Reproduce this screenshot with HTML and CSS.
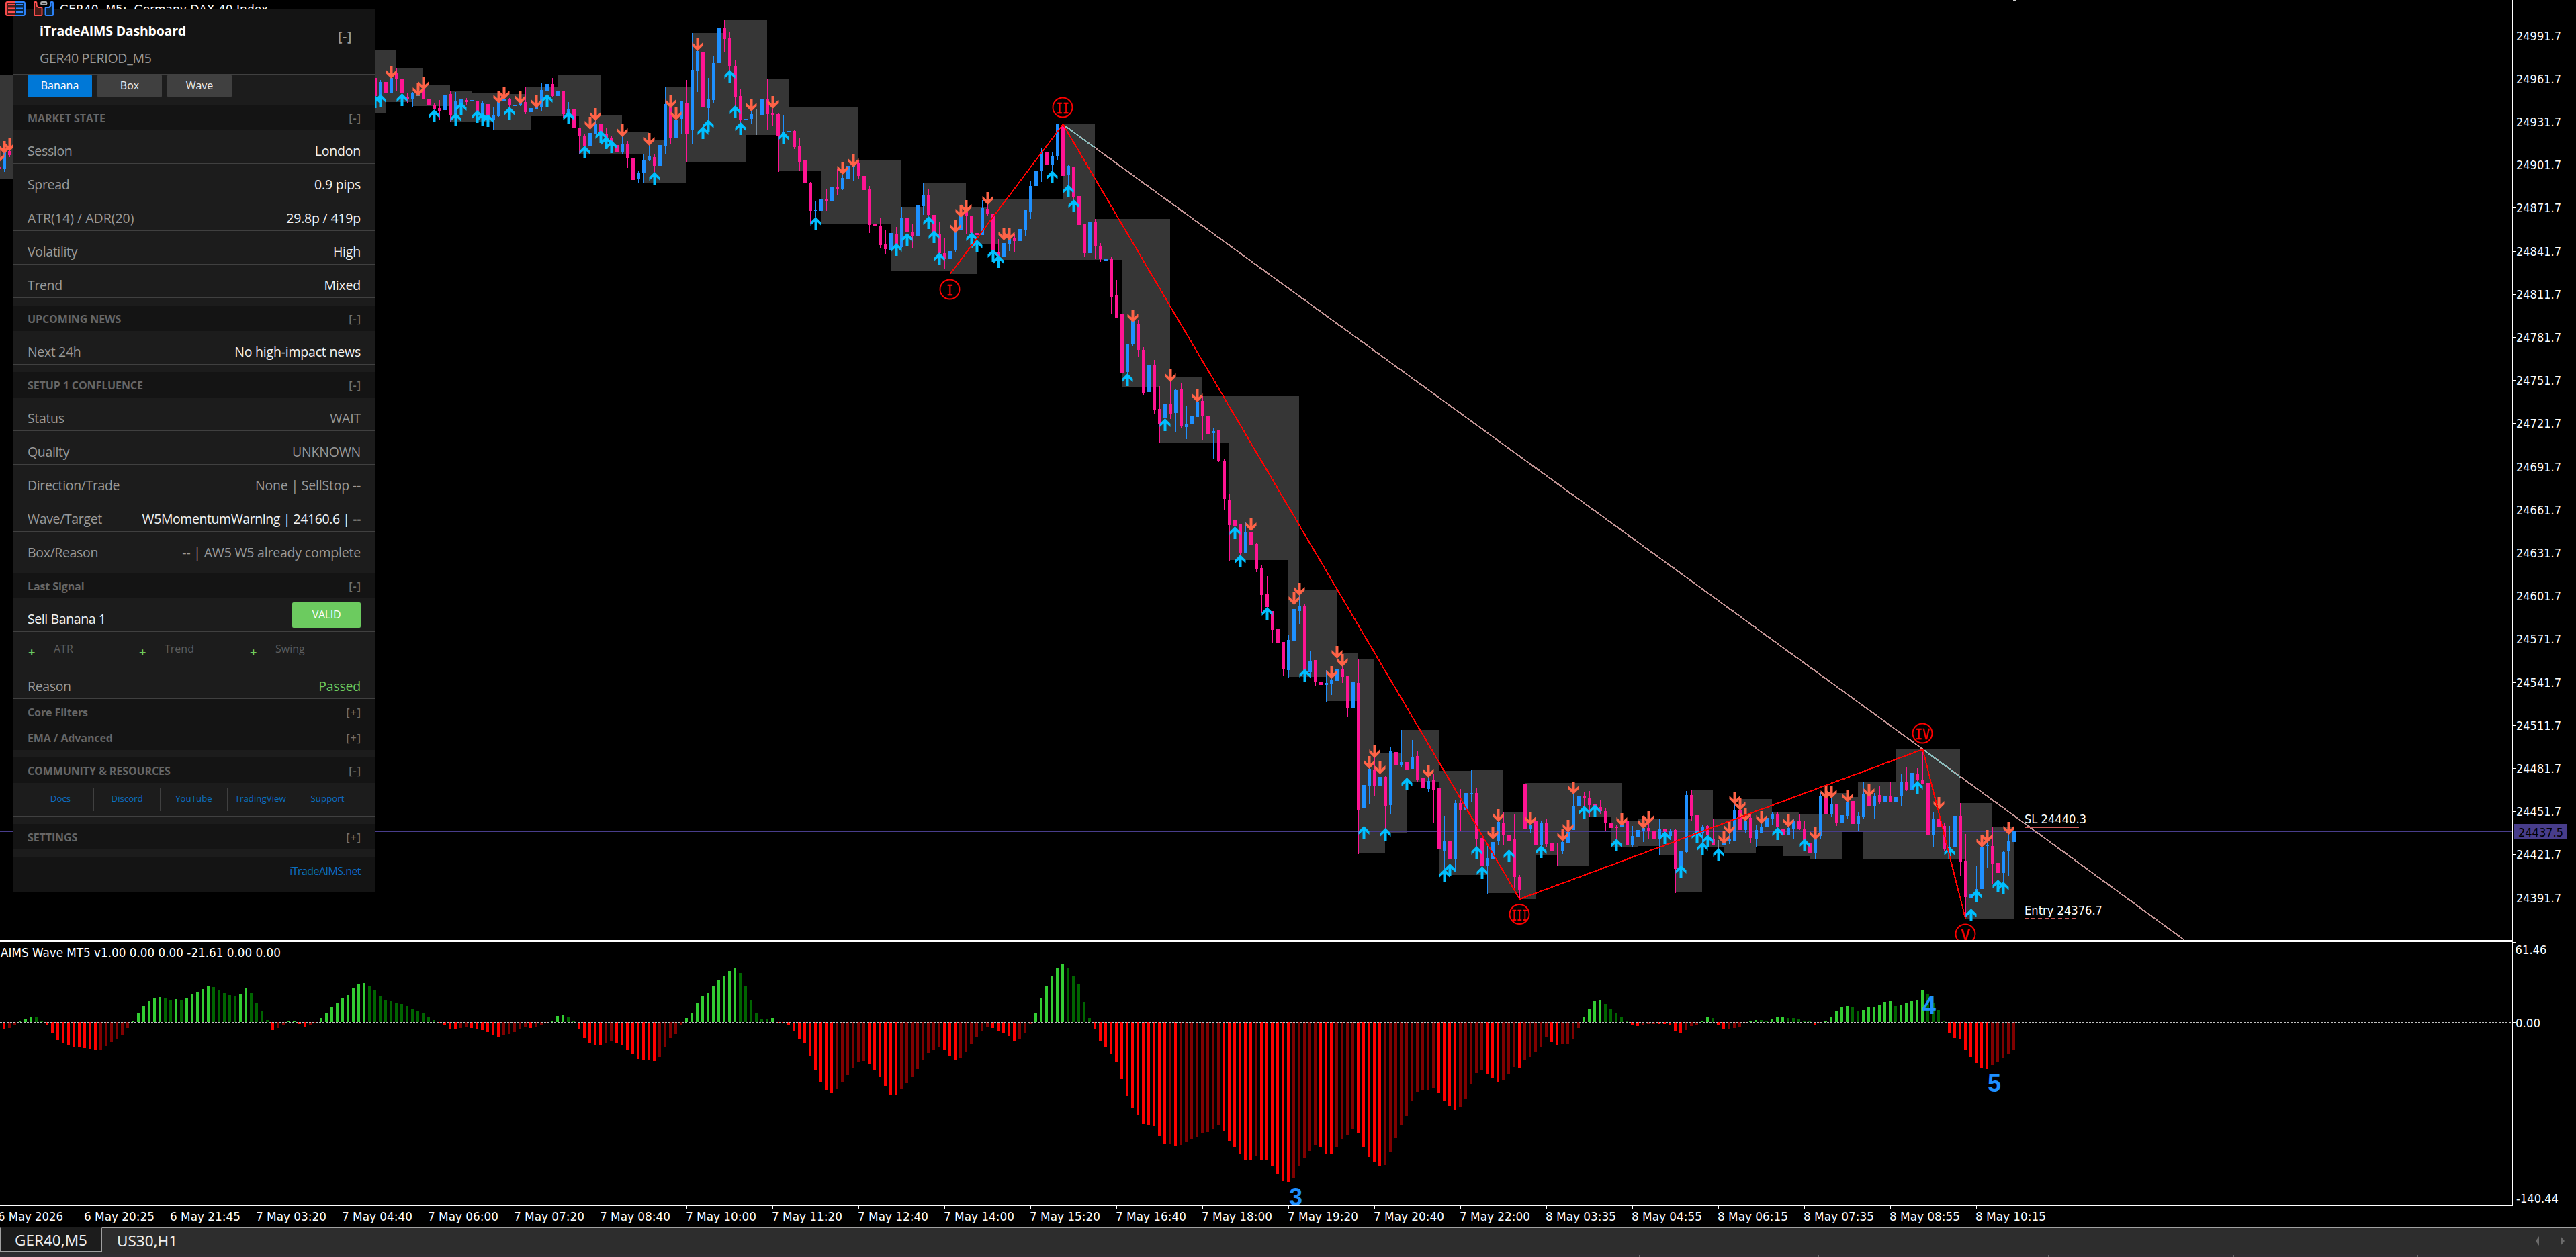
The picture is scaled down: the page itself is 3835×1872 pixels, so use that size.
FILE: index.html
```html
<!DOCTYPE html>
<html lang="en">
<head>
<meta charset="utf-8">
<title>GER40, M5</title>
<link rel="stylesheet" href="styles.css">
</head>
<body>
<main class="terminal">
  <section class="chart">
    <svg class="plot" id="plot" width="3835" height="1828" viewBox="0 0 3835 1828"></svg>

    <aside class="panel">
      <header class="panel-head">
        <div class="titles">
          <h1>iTradeAIMS Dashboard</h1>
          <p>GER40 PERIOD_M5</p>
        </div>
        <span class="fold">[-]</span>
      </header>
      <nav class="tabs">
        <span class="tab active">Banana</span>
        <span class="tab">Box</span>
        <span class="tab">Wave</span>
      </nav>

      <h2 class="section"><span>MARKET STATE</span><i>[-]</i></h2>
      <div class="row"><span>Session</span><b>London</b></div>
      <div class="row"><span>Spread</span><b>0.9 pips</b></div>
      <div class="row"><span class="wide">ATR(14) / ADR(20)</span><b>29.8p / 419p</b></div>
      <div class="row"><span>Volatility</span><b>High</b></div>
      <div class="row"><span>Trend</span><b>Mixed</b></div>

      <h2 class="section gap"><span>UPCOMING NEWS</span><i>[-]</i></h2>
      <div class="row"><span>Next 24h</span><b>No high-impact news</b></div>

      <h2 class="section gap"><span>SETUP 1 CONFLUENCE</span><i>[-]</i></h2>
      <div class="row"><span>Status</span><b class="dim">WAIT</b></div>
      <div class="row"><span>Quality</span><b class="dim">UNKNOWN</b></div>
      <div class="row"><span>Direction/Trade</span><b class="dim">None | SellStop --</b></div>
      <div class="row"><span>Wave/Target</span><b class="long">W5MomentumWarning | 24160.6 | --</b></div>
      <div class="row"><span>Box/Reason</span><b class="dim">-- | AW5 W5 already complete</b></div>

      <h2 class="section gap"><span>Last Signal</span><i>[-]</i></h2>
      <div class="row signal"><b>Sell Banana 1</b><em class="badge">VALID</em></div>
      <div class="row checks">
        <span class="check"><i>+</i>ATR</span>
        <span class="check"><i>+</i>Trend</span>
        <span class="check"><i>+</i>Swing</span>
      </div>
      <div class="row"><span>Reason</span><b class="ok">Passed</b></div>
      <h2 class="section"><span>Core Filters</span><i>[+]</i></h2>
      <h2 class="section"><span>EMA / Advanced</span><i>[+]</i></h2>

      <h2 class="section gap"><span>COMMUNITY &amp; RESOURCES</span><i>[-]</i></h2>
      <div class="row links">
        <a>Docs</a><a>Discord</a><a>YouTube</a><a>TradingView</a><a>Support</a>
      </div>

      <h2 class="section gap"><span>SETTINGS</span><i>[+]</i></h2>
      <footer class="panel-foot"><a>iTradeAIMS.net</a></footer>
    </aside>

    <svg class="chart-icons" width="84" height="26" viewBox="0 0 84 26" fill="none" stroke-width="1.9">
      <path d="M23 3H11Q9 3 9 5V21Q9 23 11 23H23Z" fill="#4a1c18" stroke="none"/>
      <path d="M23 3H35Q37 3 37 5V21Q37 23 35 23H23Z" fill="#08263f" stroke="none"/>
      <path d="M23 3H11Q9 3 9 5V21Q9 23 11 23H23M12 7H22M12 12.500H22M12 18H22" stroke="#ff4f4f"/>
      <path d="M23 3H35Q37 3 37 5V21Q37 23 35 23H23M24 7H34M24 12.500H34M24 18H34" stroke="#2f86ff"/>
      <path d="M52 3H53.500Q54.500 3 54.500 4V8.500L57 11H61.500Q62.500 11 62.500 12V22Q62.500 23 61.500 23H52Q51 23 51 22V4Q51 3 52 3Z" fill="#4a1c18" stroke="#ff4f4f"/>
      <path d="M78 3H76.500Q75.500 3 75.500 4V8.500L73 11H68.500Q67.500 11 67.500 12V22Q67.500 23 68.500 23H78Q79 23 79 22V4Q79 3 78 3Z" fill="#08263f" stroke="#2f86ff"/>
      <rect x="61" y="3" width="8.500" height="4" rx="1.500" fill="#333" stroke="#a8a8a8"/>
    </svg>
  </section>

  <footer class="tabbar">
    <div class="sheets">
      <span class="sheet current">GER40,M5</span>
      <span class="sheet">US30,H1</span>
      <svg class="pager" width="50" height="14" viewBox="0 0 50 14"><path d="M9 0V14L4 7ZM41 0V14L47 7Z" fill="#6a6a6a"/></svg>
    </div>
    <div class="status">
      <svg width="3835" height="4" viewBox="0 0 3835 4"><path d="M2440.500 1V4M2707.500 1V4M2907.500 1V4M3049.500 1V4M3190.500 1V4M3325.500 1V4M3464.500 1V4M3599.500 1V4" stroke="#666"/></svg>
    </div>
  </footer>
</main>
<script src="chart.js"></script>
</body>
</html>
```
FILE: styles.css
```css
* { box-sizing: border-box; }
body {
  margin: 0;
  background: #000;
  font-family: "Open Sans", "Noto Sans", sans-serif;
}
.terminal {
  width: 3835px;
  height: 1872px;
  display: flex;
  flex-direction: column;
  overflow: hidden;
}
.chart { position: relative; flex: 0 0 1828px; overflow: hidden; }
.plot { display: block; }
.plot text {
  font-family: "DejaVu Sans Condensed", "DejaVu Sans", sans-serif;
  font-stretch: condensed;
  font-size: 17.8px;
  fill: #fff;
}
.plot .wave {
  font-family: "Liberation Sans", Arial, sans-serif;
  font-stretch: normal;
  font-weight: bold;
  font-size: 36px;
  fill: #1e90ff;
}
.plot .roman {
  font-family: "DejaVu Sans Mono", monospace;
  font-stretch: normal;
  font-size: 22px;
  fill: #f00;
  stroke: #f00;
  stroke-width: 0.3px;
}
.plot .tag { fill: #000; }
.chart-icons { position: absolute; left: 0; top: 0; }

.panel {
  position: absolute;
  left: 19px;
  top: 13px;
  width: 540px;
  background: #1c1c1c;
  color: #999;
  font-size: 19.5px;
  letter-spacing: -0.35px;
}
.panel h1, .panel h2, .panel p { margin: 0; }
.panel i, .panel em { font-style: normal; }
.panel-head {
  height: 98px;
  padding: 0 35px 0 40px;
  display: flex;
  justify-content: space-between;
  background: #141414;
  border-bottom: 1px solid #404040;
}
.panel-head h1 {
  margin-top: 19px;
  font-size: 19.5px;
  line-height: 28px;
  letter-spacing: -0.2px;
  color: #fff;
}
.panel-head p { margin-top: 13px; line-height: 28px; letter-spacing: -0.3px; }
.fold { margin-top: 28px; line-height: 26px; font-weight: 600; letter-spacing: 0.6px; }
.tabs { display: flex; gap: 8px; padding-left: 22px; height: 45px; }
.tab {
  width: 96px;
  height: 34px;
  border-radius: 2px;
  background: #404040;
  color: #eee;
  font-size: 16px;
  line-height: 33px;
  text-align: center;
  letter-spacing: 0;
}
.tab.active { background: #0078d7; color: #fff; }
.section {
  height: 38px;
  padding: 2px 22px 0;
  display: flex;
  justify-content: space-between;
  background: #141414;
  color: #666;
  font-size: 16px;
  line-height: 37px;
  font-weight: bold;
  letter-spacing: -0.1px;
}
.section i { font-weight: 600; color: #707070; letter-spacing: 1px; margin-right: -1px; }
.section.gap { margin-top: 11px; }
.row {
  height: 50px;
  padding: 12px 22px 0;
  display: flex;
  justify-content: space-between;
  border-bottom: 1px solid #404040;
  line-height: 37px;
}
.row .wide { letter-spacing: 0; }
.row b { font-weight: normal; color: #f2f2f2; letter-spacing: -0.2px; }
.row b.long { letter-spacing: -0.42px; }
.row b.dim { color: #999; }
.row b.ok { color: #6ccb5f; }
.row.signal { padding-top: 6px; }
.row.signal b { line-height: 49px; letter-spacing: -0.4px; }
.badge {
  width: 102px;
  height: 38px;
  border-radius: 2px;
  background: #6ccb5f;
  color: #fff;
  font-size: 16px;
  line-height: 37px;
  text-align: center;
}
.row.checks { justify-content: flex-start; padding-top: 7px; }
.check {
  width: 165px;
  display: flex;
  color: #5e5e5e;
  font-size: 16px;
  line-height: 37px;
  letter-spacing: 0;
}
.check i {
  width: 39px;
  padding: 5px 0 0 1px;
  color: #6ccb5f;
  font-size: 18px;
  font-weight: 700;
}
.row.links { padding-top: 8px; }
.row.links a {
  width: 99px;
  height: 34px;
  border-right: 1px solid #404040;
  color: #0b6fc0;
  font-size: 13.3px;
  line-height: 31px;
  text-align: center;
  letter-spacing: 0;
}
.row.links a:last-child { border-right: 0; }
.panel-foot {
  margin-top: 11px;
  height: 52px;
  padding: 0 22px;
  background: #141414;
  text-align: right;
  font-size: 16px;
  line-height: 42px;
  letter-spacing: -0.55px;
  color: #0b6fc0;
}

.tabbar { flex: 1; display: flex; flex-direction: column; }
.sheets {
  height: 39px;
  display: flex;
  align-items: flex-start;
  background: #2d2d2d;
  border-top: 1px solid #a0a0a0;
  font-family: "Noto Sans", sans-serif;
  font-size: 22.5px;
  letter-spacing: 0;
  color: #eee;
}
.sheet { padding-left: 22px; line-height: 38px; height: 36px; }
.sheet.current {
  width: 152px;
  padding-left: 21px;
  line-height: 36px;
  margin-top: -1px;
  background: #1c1c1c;
  border: 1px solid #a0a0a0;
  border-top-color: #1c1c1c;
}
.pager { margin: 12px 14px 0 auto; }
.status { height: 5px; background: #2f2d31; border-top: 1px solid #a0a0a0; }
.status svg { display: block; }
```
FILE: chart.js
```js
const plot = document.getElementById('plot');
const parts = [];
const STEP = 8;

const COLORS = { p: '#ff1493', b: '#1e90ff', g: '#778899' };

function rect(x, y, w, h, fill) {
  parts.push(`<rect x="${x}" y="${y}" width="${w}" height="${h}" fill="${fill}" shape-rendering="crispEdges"/>`);
}
function line(x1, y1, x2, y2, color, width, extra = '') {
  parts.push(`<line x1="${x1}" y1="${y1}" x2="${x2}" y2="${y2}" stroke="${color}" stroke-width="${width}" shape-rendering="crispEdges" ${extra}/>`);
}
function text(x, y, str, length, cls = '') {
  const fit = length ? `textLength="${length}" lengthAdjust="spacingAndGlyphs"` : '';
  parts.push(`<text x="${x}" y="${y}" class="${cls}" ${fit}>${str}</text>`);
}

/* Range boxes: left, top, right, bottom */
const boxes = [
  [0,111,19,266],[559,74,574,169],[574,74,590,152],[590,102,614,152],[614,102,630,158],[630,126,670,158],
  [670,136,702,181],[702,139,735,181],[735,139,742,193],[742,140,782,193],[782,130,790,193],[790,130,831,173],
  [831,112,862,173],[862,112,894,229],[894,172,926,229],[926,196,958,229],[958,196,966,272],[966,209,990,272],
  [990,129,1022,272],[1022,129,1031,241],[1031,49,1078,241],[1078,30,1110,241],[1110,30,1142,201],
  [1142,118,1158,201],[1158,118,1174,255],[1174,159,1222,255],[1222,159,1278,333],[1278,238,1326,333],
  [1326,238,1342,404],[1342,308,1374,404],[1374,273,1414,404],[1414,273,1438,408],[1438,309,1454,408],
  [1454,309,1470,364],[1470,297,1486,364],[1486,297,1582,387],[1582,184,1630,387],[1630,326,1670,387],
  [1670,326,1726,577],[1726,326,1742,659],[1742,561,1790,659],[1790,590,1830,659],[1830,590,1918,834],
  [1918,590,1934,1008],[1934,879,1974,1008],[1974,879,1990,1044],[1990,973,2022,1044],[2022,981,2046,1271],
  [2046,1121,2062,1271],[2062,1121,2086,1240],[2086,1087,2094,1240],[2094,1087,2142,1165],[2142,1148,2190,1303],
  [2190,1147,2214,1303],[2214,1147,2238,1330],[2238,1209,2262,1330],[2262,1209,2270,1339],[2270,1166,2286,1339],
  [2286,1166,2318,1273],[2318,1166,2366,1289],[2366,1166,2398,1216],[2398,1166,2414,1261],[2414,1222,2438,1261],
  [2438,1219,2470,1260],[2470,1219,2494,1273],[2494,1219,2518,1329],[2518,1176,2534,1329],[2534,1176,2550,1261],
  [2550,1219,2566,1261],[2566,1219,2590,1270],[2590,1190,2614,1270],[2614,1190,2638,1260],[2638,1209,2654,1260],
  [2654,1209,2678,1275],[2678,1212,2694,1275],[2694,1212,2726,1280],[2726,1181,2742,1280],[2742,1181,2750,1237],
  [2750,1187,2766,1237],[2766,1165,2774,1237],[2774,1165,2822,1280],[2822,1116,2918,1280],[2918,1196,2926,1280],
  [2926,1196,2966,1368],[2966,1232,2998,1368]
];
for (const [l, t, r, b] of boxes) rect(l, t, r - l, b - t, '#363636');

/* Current price level */
rect(0, 1238, 3740, 1, '#483d8b');

/* Candles per block: colour, high, low, body top, body bottom.
   unit = subdivisions per pixel, base = pixel offset of the block. */
const candleBlocks = [
  { first: -1, unit: 2.3059, base: 0, rows: `p 572 580 572 580;b 523 590 523 578;p 510 540 519 533` },
  { first: 69, unit: 3, base: 0, rows: `
p 348 430 348 430;b 357 430 366 430;p 312 459 366 417;b 348 417 348 417;p 306 405 327 354;p 330 420 351 418;p 414 458 432 441;
b 411 476 414 441;g 425 471 426 429;p 395 444 395 444;p 438 527 441 471;p 462 490 471 486;p 447 534 483 495;b 423 492 426 492;
p 408 545 420 516;b 411 510 453 510;b 441 465 441 465;p 438 470 447 456;b 417 468 447 453;p 450 495 450 495;b 453 510 462 510;
p 453 515 465 515;b 480 582 513 534;b 456 522 456 519;b 440 459 440 453;p 438 480 441 471;b 426 483 468 474;b 455 474 455 471;
p 390 510 456 501;b 474 522 483 501;b 475 489 475 486;b 369 495 402 477;b 369 430 375 408;p 348 435 375 429;b 336 429 405 429;
p 405 528 405 510;b 456 510 486 505;p 489 576 489 573;p 573 690 573 609;p 600 660 606 654;b 576 651 594 651;b 537 597 555 597;
p 516 590 555 590;p 570 620 600 620;p 606 640 615 635;p 648 702 648 681;b 609 687 642 681;p 630 750 642 708;p 702 804 705 804;
b 765 819 771 801;b 687 819 714 774;b 648 720 696 717;p 690 768 702 741;b 630 765 648 741;b 387 690 465 651;p 480 645 480 615;
b 530 642 534 615;b 453 600 453 531;p 357 726 462 597;b 147 645 312 579;b 225 411 228 318;p 210 570 231 477;b 348 540 444 483;
b 249 459 282 447;b 126 303 126 282;p 90 234 126 174;p 144 315 171 297;p 267 475 294 432;p 396 550 429 537;b 498 606 531 534;
b 498 555 510 531;g 486 603 513 516;b 435 588 441 516;p 354 582 441 510;p 485 561 507 513;p 507 768 510 606;b 513 600 588 600;
b 477 630 585 591;p 579 666 585 657;p 615 762 654 723;p 696 828 717 816;p 813 1002 816 942;b 897 970 939 942;b 873 1008 891 942;
p 843 942 891 900;b 828 933 834 900` },
  { first: 155, unit: 2.7034, base: 100, rows: `
p 411 514 481 489;b 432 495 446 489;b 385 487 397 449;b 390 457 390 400;p 376 449 387 438;p 416 511 438 495;p 479 668 492 635;
p 616 722 633 641;p 606 727 638 716;p 654 754 714 733;b 616 825 668 735;p 643 715 670 715;b 562 727 608 725;p 570 670 608 665;
p 633 727 662 679;b 549 703 557 679;b 468 595 516 560;p 489 600 516 595;p 589 660 595 665;p 624 750 673 750;p 687 811 749 773;
b 716 833 741 773;b 665 743 665 738;b 600 708 600 657;p 580 670 584 600;p 597 670 597 668;p 630 700 668 676;b 535 676 568 676;
p 550 600 570 592;p 589 738 589 736;p 692 765 746 760;b 697 768 708 762;b 690 741 693 714;p 670 746 687 700;b 584 706 652 700;
b 576 679 576 654;b 460 611 479 584;b 406 524 416 479;b 324 462 341 419;p 320 392 341 392;b 341 420 360 392;b 230 376 230 360;
p 230 441 235 438;b 392 475 397 435;p 400 535 400 522;p 503 635 519 635;p 633 765 633 749;b 622 768 622 749;p 611 773 622 719;
p 708 784 722 773;b 668 862 770 779;p 762 992 770 927;p 857 1011 919 1008;p 954 1292 995 1233;b 1114 1235 1114 1227;
b 1020 1122 1022 1117;p 1019 1165 1033 1138;p 1127 1322 1138 1314;b 1157 1333 1198 1308;p 1179 1395 1198 1379;
p 1284 1514 1376 1438;b 1327 1415 1357 1415;p 1265 1417 1354 1395;b 1295 1471 1300 1392;p 1273 1454 1298 1446;
b 1363 1498 1436 1449;b 1398 1503 1406 1438;b 1345 1408 1345 1408;p 1325 1503 1344 1406;p 1381 1533 1403 1476` },
  { first: 225, unit: 2.45, base: 420, rows: `
b 532 647 544 551;p 541 657 541 654;p 647 831 654 791;p 772 1018 796 887;p 789 892 870 892;p 882 997 882 987;b 877 987 914 987;
p 907 975 914 958;p 953 1058 955 1049;p 1034 1207 1044 1142;p 1073 1187 1139 1187;p 1200 1318 1200 1269;p 1257 1362 1267 1316;
p 1313 1436 1313 1414;b 1286 1443 1306 1416;b 1176 1311 1193 1311;b 1141 1249 1181 1200;p 1174 1414 1181 1416;
b 1347 1443 1382 1423;p 1379 1472 1379 1460;p 1411 1512 1458 1470;b 1416 1531 1463 1470;b 1445 1507 1453 1465;
b 1372 1470 1414 1455;p 1401 1463 1411 1441` },
  { first: 250, unit: 2.8, base: 840, rows: `
p 468 638 468 602;b 482 650 493 602;p 395 1210 496 1025;b 893 1093 921 1016;b 851 1000 854 924;p 806 969 857 924;b 874 949 888 924;
p 885 1103 888 1008;b 764 1042 781 1005;p 742 874 784 840;b 692 846 826 840;p 826 893 826 857;b 734 854 806 854;p 778 910 801 899;
p 893 972 893 932;b 888 949 904 938;p 876 1081 902 941;p 862 1299 935 1190;b 1050 1275 1154 1198;p 1128 1250 1154 1232;
b 986 1285 997 1232;p 938 1114 997 1028;b 879 1053 955 1028;b 860 994 955 958;p 932 1178 955 1145;p 1109 1260 1142 1257;
b 1176 1375 1226 1257;b 1145 1243 1159 1229;b 1073 1173 1075 1156;p 1033 1173 1078 1131;p 1098 1190 1128 1154;
p 1042 1355 1148 1305;p 1296 1397 1305 1361;p 913 1126 918 1103;b 1087 1123 1087 1103;p 1070 1215 1072 1170;b 1070 1175 1081 1170;
p 1064 1182 1078 1168;p 1156 1210 1165 1198;p 1165 1260 1195 1198;b 1155 1210 1159 1198;b 1118 1173 1118 1162;
b 958 1109 1008 1109;b 913 1008 966 1008;p 949 1010 966 977;p 946 1056 977 1005;p 972 1005 1003 1008;p 983 1042 1014 1030;
p 1016 1114 1030 1081;p 1078 1182 1078 1100;p 1086 1145 1096 1100;b 1087 1128 1087 1096;p 1070 1170 1072 1170;b 1092 1179 1134 1170;
b 1089 1179 1109 1137;b 1098 1159 1100 1114;p 1080 1145 1100 1114;p 1100 1204 1112 1145;b 1064 1215 1106 1145;p 1106 1115 1106 1118;
b 1106 1150 1112 1134;p 1106 1372 1109 1271;b 1150 1255 1198 1257;b 946 1204 963 1201` },
  { first: 314, unit: 3, base: 1040, rows: `
p 408 549 432 525;p 495 590 522 590;b 567 645 573 600;p 567 612 570 612;p 537 657 630 657;g 633 672 654 657;b 645 684 648 657;
b 603 651 627 636;b 470 639 501 639;p 500 621 501 588;b 540 603 545 588;p 520 645 534 624;b 567 663 588 627;b 558 600 573 600;
b 531 633 534 573;b 507 567 516 537;p 510 577 519 577;p 567 708 585 609;b 573 612 579 609;b 537 627 549 582;p 516 588 549 582;
p 549 633 582 633;p 633 723 645 693;b 630 720 630 693;b 420 627 435 615;p 445 540 445 519;b 445 528 474 519;p 474 570 474 558;
b 498 594 522 558;b 462 537 465 525;p 456 561 459 561;b 507 594 525 561;b 375 537 426 528;p 438 513 438 483;b 423 537 438 483;
p 390 474 432 462;b 429 498 435 462;p 375 462 435 462;b 423 723 441 462;b 339 483 375 435;p 306 414 372 408;b 300 432 333 408;
p 312 370 336 366;p 232 381 363 381;p 336 618 378 612;b 507 666 537 612;p 495 573 537 573;p 555 684 570 672;b 570 680 663 672;
b 525 672 525 663;p 468 795 525 729;p 606 985 726 888;b 699 940 873 894;b 750 856 852 856;b 660 870 662 852;b 640 759 657 660;
p 576 830 660 738;p 675 812 735 780;b 681 822 687 780;b 606 792 639 684;b 570 645 594 642` }
];
for (const { first, unit, base, rows } of candleBlocks) {
  rows.trim().split(';').forEach((row, i) => {
    const [kind, ...v] = row.trim().split(' ');
    const [high, low, top, bottom] = v.map(n => Math.round(base + n / unit));
    const x = (first + i) * STEP;
    rect(x + 6, high, 1, low - high, COLORS[kind]);
    rect(x + 4, top, 5, Math.max(1, bottom - top), COLORS[kind]);
  });
}

/* Fractal arrows: bar index and tip position, same units as the candles */
const arrowBlocks = [
  { unit: 2.3059, base: 0, up: [], down: [[-1, 558], [0, 527], [1, 519]] },
  { unit: 3, base: 0,
    up: [[69,427],[70,420],[74,417],[80,489],[84,504],[85,456],[88,492],[89,504],[90,510],[94,477],[101,420],[105,498],[108,651],[111,582],[112,609],[113,627],[121,768],[130,564],[131,534],[135,312],[136,471],[137,546],[145,588],[151,969]],
    down: [[72,351],[77,429],[78,402],[92,462],[93,444],[96,465],[99,483],[109,579],[110,540],[115,612],[120,651],[124,483],[125,537],[129,228],[139,498],[143,486]] },
  { unit: 2.7034, base: 100,
    up: [[166,708],[168,668],[172,600],[173,657],[174,746],[180,665],[181,695],[184,733],[185,757],[195,416],[198,473],[199,532],[209,1233],[216,1414]],
    down: [[156,433],[158,403],[177,668],[178,605],[179,587],[183,554],[186,697],[187,697],[210,1027],[217,1268],[222,1349]] },
  { unit: 2.45, base: 420,
    up: [[229,892],[230,995],[235,1186],[242,1412]],
    down: [[232,909],[240,1178],[241,1144],[247,1447],[248,1374],[249,1403]] },
  { unit: 2.8, base: 840,
    up: [[253,1092],[257,1101],[261,890],[268,1271],[269,1249],[274,1177],[275,1260],[280,1190],[286,1173],[294,1008],[296,1003],[300,1145],[309,1114],[312,1255]],
    down: [[254,854],[255,809],[256,876],[265,890],[277,1148],[278,1075],[284,1089],[290,1156],[291,1121],[292,960],[301,1092],[305,1103],[306,1083]] },
  { unit: 3, base: 1040,
    up: [[315,588],[316,642],[317,609],[319,669],[330,576],[335,627],[356,369],[362,663],[366,939],[367,855],[371,810],[372,819]],
    down: [[320,651],[321,606],[322,474],[323,501],[324,549],[327,561],[332,576],[337,633],[339,450],[340,447],[343,465],[347,441],[360,498],[368,666],[369,645],[373,609]] }
];
for (const { unit, base, up, down } of arrowBlocks) {
  const draw = (list, dir, color) => {
    for (const [k, tip] of list) {
      const x = k * STEP + 6.5;
      const y = Math.round(base + tip / unit);
      parts.push(`<path transform="translate(${x} ${y}) scale(1 ${dir})" d="M0 0L8 8V13L2 7.500V19H-2V7.500L-8 13V8Z" fill="${color}"/>`);
    }
  };
  draw(up, 1, '#00bfff');
  draw(down, -1, '#ff6347');
}

/* Trend line and wave legs */
line(1582, 185, 2863, 1116, '#bc8f8f', 2);
line(2863, 1116, 3252, 1400, '#bc8f8f', 2);
line(1582, 185, 1630, 220, '#8abcbc', 2);
line(2863, 1116, 2918, 1157, '#8abcbc', 2);
parts.push('<polyline points="1414.500,408 1582.500,185 2262.500,1339 2862.500,1116 2926,1368" fill="none" stroke="#f00" stroke-width="2" shape-rendering="crispEdges"/>');

/* Circled wave numbers */
parts.push('<clipPath id="price"><rect width="3740" height="1400"/></clipPath><g clip-path="url(#price)">');
for (const [x, y, label, w] of [[1414, 431, 'I', 10], [1582, 160, 'II', 19], [2262, 1361.5, 'III', 24], [2862, 1092, 'IV', 22], [2926, 1391, 'V', 14]]) {
  parts.push(`<circle cx="${x}" cy="${y}" r="14.500" fill="none" stroke="#f00" stroke-width="1.900"/>`);
  text(x - w / 2, y + 9, label, w, 'roman');
}
parts.push('</g>');

/* Order levels */
text(3014, 1225.5, 'SL 24440.3', 92);
rect(3014, 1231, 81, 2, '#cd5c5c');
text(3014, 1362, 'Entry 24376.7', 116);
line(3014, 1368, 3091, 1368, '#cd5c5c', 2, 'stroke-dasharray="6 4"');

/* Momentum histogram, tip positions in thirds of a pixel, zero at 397 */
const ZERO = 397;
const momentum = `430 424 409 393 384 375 376 390 412 448 478 493 498 511 511 514 517 522 520 504 487 475 454 424 393 357 324 303 291 285
291 297 296 297 291 273 261 249 237 240 255 267 276 282 273 243 267 309 348 387 432 424 409 393 393 405 418 412 400 378
354 327 312 291 276 246 225 222 234 252 282 297 303 309 315 324 336 348 357 372 387 401 412 426 427 424 420 424 427 432
442 457 462 454 451 442 427 418 424 420 412 402 390 369 366 372 393 430 469 490 498 498 490 484 490 502 520 538 562 568
568 571 553 508 469 451 409 378 354 312 282 267 237 210 192 168 156 177 234 300 354 381 382 378 400 402 412 439 472 490
547 613 667 700 715 697 667 634 604 577 571 583 613 643 685 721 724 697 670 643 607 565 535 523 511 520 550 565 556 529
496 463 439 418 424 439 445 460 484 472 445 405 354 291 234 192 156 138 156 189 228 306 378 430 481 511 538 577 652 727
781 811 853 859 862 907 943 940 949 946 931 922 910 892 889 874 859 883 928 955 988 1015 1015 997 1012 1012 1039 1075 1108 1114
1096 1042 1006 973 946 955 985 985 955 922 901 874 892 955 1000 1024 1042 1036 976 916 859 817 751 709 703 702 691 715 748 772
790 778 739 676 625 610 628 649 667 658 631 598 604 568 553 532 508 463 487 498 497 496 472 424 375 336 303 297 315 336
354 375 396 412 415 409 406 405 405 405 412 436 445 433 415 409 393 372 378 412 430 429 424 418 402 390 387 388 391 384
375 374 378 379 381 390 396 409 400 390 372 345 327 324 330 348 342 330 329 318 306 303 324 318 312 303 297 255 270 310
342 390 445 469 475 520 553 580 601 607 589 574 559 541 522`.split(/\s+/).map(Number);
momentum.forEach((tip, k) => {
  const v = ZERO - tip;
  const prev = k ? ZERO - momentum[k - 1] : 0;
  const growing = v * prev <= 0 || Math.abs(v) >= Math.abs(prev);
  const color = v > 0 ? (growing ? '#32cd32' : '#006400') : (growing ? '#ff0000' : '#800000');
  const h = Math.max(1, Math.round(Math.abs(v) / 3));
  rect(k * STEP + 4, v > 0 ? 1522 - h : 1522, 4, h, color);
});
line(0, 1522.5, 3740, 1522.5, '#c0c0c0', 1, 'stroke-dasharray="3 2"');
text(1919, 1795, '3', 0, 'wave');
text(2862, 1510, '4', 0, 'wave');
text(2959, 1626, '5', 0, 'wave');
text(1, 1424.5, 'AIMS Wave MT5 v1.00 0.00 0.00 -21.61 0.00 0.00', 417);

/* Pane frames */
rect(0, 1400, 3741, 1, '#fff');
rect(0, 1402, 3741, 1, '#fff');
rect(0, 1795, 3741, 1, '#fff');
rect(3740, 0, 1, 1401, '#fff');
rect(3740, 1402, 1, 394, '#fff');
rect(2997, 0, 5, 1, '#ccc');

/* Price scale */
for (let i = 0; i <= 20; i++) {
  const y = Math.round(52.5 + i * 64.2);
  rect(3741, y, 4, 1, '#fff');
  text(3746, y + 7, (24991.7 - i * 30).toFixed(1), 67);
}
rect(3743, 1227, 78, 23, '#483d8b');
text(3749, 1246, '24437.5', 67, 'tag');
rect(3741, 1403, 4, 1, '#fff');
rect(3741, 1522, 4, 1, '#fff');
rect(3741, 1794, 4, 1, '#fff');
text(3744.500, 1421, '61.46', 47);
text(3745, 1530, '0.00', 37);
text(3746, 1790.5, '-140.44', 63);

/* Time scale */
const times = ['6 May 2026', '6 May 20:25', '6 May 21:45', '7 May 03:20', '7 May 04:40', '7 May 06:00', '7 May 07:20', '7 May 08:40',
  '7 May 10:00', '7 May 11:20', '7 May 12:40', '7 May 14:00', '7 May 15:20', '7 May 16:40', '7 May 18:00', '7 May 19:20',
  '7 May 20:40', '7 May 22:00', '8 May 03:35', '8 May 04:55', '8 May 06:15', '8 May 07:35', '8 May 08:55', '8 May 10:15'];
times.forEach((label, i) => {
  const x = -2 + i * 128;
  rect(x, 1796, 1, 4, '#fff');
  text(x - 1, 1818, label, i ? 105 : 97);
});

/* Chart caption, tucked behind the dashboard */
text(89, 19.5, 'GER40, M5:&#160; Germany DAX 40 Index', 310);

plot.innerHTML = parts.join('');
```
